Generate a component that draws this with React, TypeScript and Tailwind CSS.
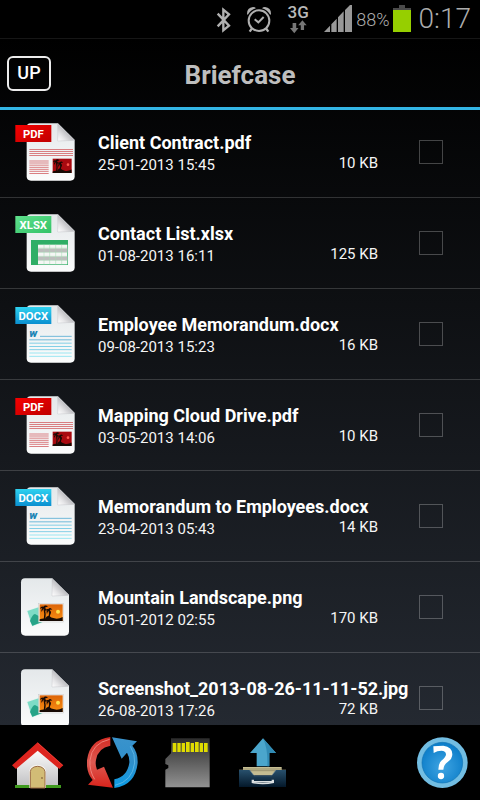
import { useState, type ReactNode } from "react";

type FileKind = "pdf" | "xlsx" | "docx" | "image";

type FileItem = {
  name: string;
  date: string;
  size: string;
  kind: FileKind;
};

const files: FileItem[] = [
  { name: "Client Contract.pdf", date: "25-01-2013 15:45", size: "10 KB", kind: "pdf" },
  { name: "Contact List.xlsx", date: "01-08-2013 16:11", size: "125 KB", kind: "xlsx" },
  { name: "Employee Memorandum.docx", date: "09-08-2013 15:23", size: "16 KB", kind: "docx" },
  { name: "Mapping Cloud Drive.pdf", date: "03-05-2013 14:06", size: "10 KB", kind: "pdf" },
  { name: "Memorandum to Employees.docx", date: "23-04-2013 05:43", size: "14 KB", kind: "docx" },
  { name: "Mountain Landscape.png", date: "05-01-2012 02:55", size: "170 KB", kind: "image" },
  { name: "Screenshot_2013-08-26-11-11-52.jpg", date: "26-08-2013 17:26", size: "72 KB", kind: "image" },
];

/* ================= FILE ICONS ================= */

// shared gradients, referenced by id from every icon
function IconDefs() {
  return (
    <svg className="absolute size-0" aria-hidden="true">
      <defs>
        <linearGradient id="page" x1="0" y1="0" x2="0" y2="1">
          <stop offset="0" stopColor="#e4e8ea" />
          <stop offset="1" stopColor="#fbfcfc" />
        </linearGradient>
        <linearGradient id="fold" x1="1" y1="0" x2="0" y2="1">
          <stop offset="0.45" stopColor="#b9b9bd" />
          <stop offset="0.75" stopColor="#e6e6e8" />
          <stop offset="1" stopColor="#ffffff" />
        </linearGradient>
        <linearGradient id="tag-pdf" x1="0" y1="0" x2="1" y2="1">
          <stop offset="0" stopColor="#f60000" />
          <stop offset="1" stopColor="#c00000" />
        </linearGradient>
        <linearGradient id="tag-xlsx" x1="0" y1="0" x2="1" y2="1">
          <stop offset="0" stopColor="#5fe08c" />
          <stop offset="1" stopColor="#33c267" />
        </linearGradient>
        <linearGradient id="tag-docx" x1="0" y1="0" x2="0" y2="1">
          <stop offset="0" stopColor="#2fd2f0" />
          <stop offset="1" stopColor="#0a8fd0" />
        </linearGradient>
        <linearGradient id="sunset" x1="0" y1="0" x2="0" y2="1">
          <stop offset="0" stopColor="#dc6408" />
          <stop offset="1" stopColor="#f98f12" />
        </linearGradient>
        <linearGradient id="wall" x1="0" y1="0" x2="0" y2="1">
          <stop offset="0" stopColor="#ffffff" />
          <stop offset="1" stopColor="#bfbfc1" />
        </linearGradient>
        <linearGradient id="red-arrow" x1="0" y1="0" x2="0" y2="1">
          <stop offset="0" stopColor="#d42a22" />
          <stop offset="0.5" stopColor="#dd5a52" />
          <stop offset="1" stopColor="#d9231b" />
        </linearGradient>
        <linearGradient id="blue-arrow" x1="0" y1="0" x2="0" y2="1">
          <stop offset="0" stopColor="#3a93cc" />
          <stop offset="0.5" stopColor="#2f8fcb" />
          <stop offset="1" stopColor="#0b9de6" />
        </linearGradient>
        <linearGradient id="card" x1="0" y1="0" x2="0" y2="1">
          <stop offset="0" stopColor="#2c2c2c" />
          <stop offset="0.4" stopColor="#555555" />
          <stop offset="1" stopColor="#929292" />
        </linearGradient>
        <linearGradient id="drawer" x1="0" y1="0" x2="0" y2="1">
          <stop offset="0" stopColor="#28506c" />
          <stop offset="1" stopColor="#04182a" />
        </linearGradient>
        <radialGradient id="help" cx="0.5" cy="0.6" r="0.6">
          <stop offset="0" stopColor="#3fa4e2" />
          <stop offset="1" stopColor="#0a7cc8" />
        </radialGradient>
      </defs>
    </svg>
  );
}

function Page() {
  return (
    <>
      <path
        d="M92 40H174L224 89V199Q224 212 211 212H93Q80 212 80 199V52Q80 40 92 40Z"
        fill="url(#page)"
      />
      <path d="M173 41L223 91Q205 92 173 93Q174 70 173 41Z" fill="url(#fold)" stroke="#b4b4b8" strokeWidth="1" />
    </>
  );
}

function Tag({ label, fill }: { label: string; fill: string }) {
  return (
    <>
      <rect x="46" y="45" width="108" height="51" fill={fill} />
      <text
        x="100"
        y="83"
        textAnchor="middle"
        fill="#fff"
        className="font-[Roboto,sans-serif] text-[34px] font-bold"
      >
        {label}
      </text>
    </>
  );
}

function Palm() {
  return (
    <g fill="#170a04">
      <path d="M0 50V45Q8 42 16 43Q22 33 28 34Q34 40 44 42Q56 45 69 38V50Z" />
      <path d="M12 46Q16 28 11 10L15 10Q20 28 17 46ZM25 38Q31 28 25 16L29 16Q34 28 30 38Z" />
      <path d="M1 14Q3 5 11 7Q17 0 25 7Q19 7 16 10Q21 13 20 22Q16 16 13 12Q9 15 6 23Q3 17 8 12Q4 11 1 14ZM16 21Q19 12 26 14Q32 7 38 16Q32 14 30 17Q36 21 34 31Q30 24 27 19Q23 23 22 30Q18 24 23 18Q19 18 16 21Z" />
    </g>
  );
}

function FileIcon({ kind }: { kind: FileKind }) {
  return (
    <svg viewBox="36 36 192 180" className="h-[60px] w-16 shrink-0" aria-hidden="true">
      {kind === "pdf" && (
        <>
          <Page />
          <Tag label="PDF" fill="url(#tag-pdf)" />
          <path d="M88 118.500H219M88 124.500H219M88 130.500H219M88 136.500H219" stroke="#d4666a" strokeWidth="2.500" />
          <path
            d="M88 153H146M88 159H146M88 165.500H146M88 172H146M88 178H146M88 184H146M88 190.500H146"
            stroke="#d4666a"
            strokeWidth="2.500"
          />
          <rect x="158" y="146" width="57" height="43" fill="#a80a10" />
          <circle cx="204" cy="164" r="4" fill="#ff5a50" />
          <g transform="translate(158 145) scale(0.82 0.88)">
            <Palm />
          </g>
        </>
      )}
      {kind === "xlsx" && (
        <>
          <Page />
          <Tag label="XLSX" fill="url(#tag-xlsx)" />
          <rect x="93" y="117" width="111" height="75" fill="#2fae66" />
          <rect x="114" y="131" width="88" height="59" fill="#f4f6f4" />
          <path d="M114 148H202M114 172H202" stroke="#bdbdbd" strokeWidth="11" />
          <path
            d="M114 141.500H202M114 154H202M114 166H202M114 178H202M132 131V190M149 131V190M167 131V190M185 131V190"
            stroke="#a5d8b5"
            strokeWidth="1.500"
          />
        </>
      )}
      {kind === "docx" && (
        <>
          <Page />
          <Tag label="DOCX" fill="url(#tag-docx)" />
          <text
            x="88"
            y="135"
            fill="#1d85b5"
            className="font-[Roboto,sans-serif] text-[34px] font-black italic"
          >
            w
          </text>
          <path d="M120 133H215M88 143.500H215" stroke="#6fb9d9" strokeWidth="3" />
          <path d="M88 153.500H215M88 163.500H215M88 173H215" stroke="#83cfe6" strokeWidth="3" />
          <path d="M88 183H215M88 193H215" stroke="#9be6f2" strokeWidth="3" />
        </>
      )}
      {kind === "image" && (
        <g transform="translate(-17 0)">
          <Page />
          <path d="M96 137L134 124L146 173L112 185Z" fill="#e6f3f0" />
          <path d="M99 138L133 127L144 171L114 183Z" fill="#7ddcc6" />
          <path d="M107 168Q114 148 122 147Q132 152 140 158L143 171L114 182Z" fill="#27a488" />
          <rect x="133" y="115" width="75" height="56" fill="#f3f3f3" stroke="#c8c8c8" strokeWidth="1.500" />
          <rect x="136" y="118" width="69" height="50" fill="url(#sunset)" />
          <circle cx="191" cy="140" r="6" fill="#ffe04a" />
          <g transform="translate(136 118)">
            <Palm />
          </g>
        </g>
      )}
    </svg>
  );
}

/* ================= STATUS BAR ================= */

function StatusBar() {
  return (
    <div className="flex h-[38px] shrink-0 items-center justify-end bg-black pr-[9px] text-[#adadad]">
      <svg viewBox="48 0 48 114" className="mr-3.5 h-[38px] w-4" aria-label="Bluetooth">
        <path d="M53 41L87 77L70 91V29L87 43L53 79" fill="none" stroke="#b0b0b0" strokeWidth="7" />
      </svg>
      <svg viewBox="138 0 78 114" className="mr-4 h-[38px] w-[26px]" aria-label="Alarm">
        <circle cx="177" cy="62" r="31" fill="none" stroke="#b0b0b0" strokeWidth="6" />
        <path d="M164 58L175 67L191 51" fill="none" stroke="#b0b0b0" strokeWidth="6" />
        <path d="M156 85L149 95M198 85L205 95" stroke="#b0b0b0" strokeWidth="7" />
        <path
          d="M141 41Q141 23 159 21Q165 21 168 25Q151 30 143 45ZM213 41Q213 23 195 21Q189 21 186 25Q203 30 211 45Z"
          fill="#b0b0b0"
        />
      </svg>
      <div className="mr-4 flex w-5 flex-col items-center">
        <span className="text-[17px] leading-4 font-medium text-[#b8b8b8]">3G</span>
        <svg viewBox="273 57 52 42" className="h-3.5 w-[17px]" aria-hidden="true">
          <path d="M281 66H292V81H299L286 97L273 81H281Z" fill="#777" />
          <path d="M306 87H316V73H324L311 57L298 73H306Z" fill="#777" />
        </svg>
      </div>
      <svg viewBox="375 0 84 114" className="mr-1 h-[38px] w-7" aria-label="Signal">
        <path
          d="M375 96L393 77V96ZM397 73L413 56V96H397ZM417 52L434 34V96H417ZM438 30L453 15H459V96H438Z"
          fill="#989898"
        />
      </svg>
      <span className="text-[18px] font-light">88%</span>
      <svg viewBox="579 0 54 114" className="mr-2 ml-[3px] h-[38px] w-[18px]" aria-label="Battery">
        <path d="M579 30V24H597V15H615V24H633V30Z" fill="#4a4a4a" />
        <rect x="579" y="30" width="54" height="66" fill="#96cf00" />
      </svg>
      <span className="text-[28px] font-light">0:17</span>
    </div>
  );
}

/* ================= FILE ROW ================= */

function FileRow({ file }: { file: FileItem }) {
  const [checked, setChecked] = useState(false);

  return (
    <li className="flex h-[91px] items-center border-b border-white/17 pr-[37px] pl-3">
      <FileIcon kind={file.kind} />
      <div className="ml-[22px] min-w-0 flex-1 pt-1">
        <p className="text-[18px] leading-[22px] font-bold whitespace-nowrap text-white">{file.name}</p>
        <div className="flex h-[22px] items-center justify-between text-[15px] leading-[22px] text-[#f5f5f5]">
          <span>{file.date}</span>
          <span className="pb-1">{file.size}</span>
        </div>
      </div>
      <input
        type="checkbox"
        aria-label={file.name}
        checked={checked}
        onChange={(e) => setChecked(e.target.checked)}
        className="ml-[41px] size-6 shrink-0 appearance-none border border-white/25 checked:bg-[#33b5e5]"
      />
    </li>
  );
}

/* ================= TOOLBAR ================= */

function ToolButton({ label, viewBox, children }: { label: string; viewBox: string; children: ReactNode }) {
  return (
    <button type="button" aria-label={label}>
      <svg viewBox={viewBox} className="size-[52px]" aria-hidden="true">
        {children}
      </svg>
    </button>
  );
}

function Toolbar() {
  return (
    <nav className="flex h-[75px] shrink-0 items-center gap-[23px] bg-black px-3">
      <ToolButton label="Home" viewBox="36 36 156 156">
        <path d="M51 112L113 68L174 112V188H51Z" fill="url(#wall)" />
        <path d="M45 180H90V189H45ZM136 180H183V189H136Z" fill="#3f9a1e" />
        <path d="M88 189V137Q90 120 112 119Q135 120 138 137V189Z" fill="#f6f3ee" />
        <path d="M91 189V140Q93 125 113 124Q132 125 135 140V189Z" fill="#d2bc76" stroke="#9a6c45" strokeWidth="3" />
        <circle cx="126" cy="159" r="2.500" fill="#6d4528" />
        <path d="M113 52L190 121L178 132L113 77L48 132L36 121Z" fill="#dd241e" />
        <path d="M113 54L188 121" stroke="#f04a40" strokeWidth="2" />
      </ToolButton>
      <ToolButton label="Refresh" viewBox="261 36 156 156">
        <path
          d="M331 36V62Q294 68 288 105Q285 120 291 134L312 125L339 188L264 179L278 165Q258 142 261 106Q268 44 331 36Z"
          fill="url(#red-arrow)"
        />
        <path d="M329 43Q276 54 270 106Q268 138 284 163" fill="none" stroke="#ef8078" strokeWidth="3" />
        <path
          d="M336 37L411 49L397 62Q414 82 413 114Q406 181 343 189V163Q382 154 388 113Q389 96 381 83L365 101Z"
          fill="url(#blue-arrow)"
        />
        <path d="M391 64Q406 87 404 114Q397 169 345 181" fill="none" stroke="#5ab4e4" strokeWidth="3" />
      </ToolButton>
      <ToolButton label="SD card" viewBox="36 36 156 156">
        <path d="M63 40H179V187H46V134L55 129V121L46 117V102L63 85Z" fill="url(#card)" />
        <path
          d="M68 54H79V81H68ZM82 54H92V81H82ZM95 54H105V81H95ZM108 51H119V81H108ZM122 54H132V81H122ZM135 51H146V81H135ZM149 54H159V81H149ZM162 54H173V81H162Z"
          fill="#e0dc00"
        />
      </ToolButton>
      <ToolButton label="Upload" viewBox="261 36 156 156">
        <path d="M279 126H395V134H408V150H267V134H279Z" fill="#c5bd92" />
        <path d="M279 132H395M282 137H392" stroke="#857f5e" strokeWidth="2" />
        <path d="M267 135H299L312 152H365L378 135H408V186H267Z" fill="url(#drawer)" />
        <path d="M299 135L312 152H365L378 135" fill="none" stroke="#6b8798" strokeWidth="2" />
        <path d="M305 164H312V168H365V164H372V174Q338 182 305 174Z" fill="#dce0e2" />
        <path d="M313 172H364Q338 176 313 172Z" fill="#5d6d77" />
        <path d="M339 40L378 84H358V124H320V84H300Z" fill="#4ba6cc" />
        <path d="M339 40L378 84H358V124H352Q354 70 339 40Z" fill="#318bb4" />
      </ToolButton>
      <div className="flex-1" />
      <ToolButton label="Help" viewBox="78 291 156 156">
        <circle cx="157" cy="368" r="76" fill="#72bde2" />
        <circle cx="157" cy="368" r="61" fill="url(#help)" stroke="#1274b4" strokeWidth="2" />
        <path
          d="M130 319Q144 317 160 317Q187 320 187 343Q187 357 173 366Q161 374 160 389H145Q145 371 154 362Q168 352 168 343Q167 332 154 332Q142 332 131 339Z"
          fill="#fff"
        />
        <circle cx="153" cy="408" r="9.500" fill="#fff" />
      </ToolButton>
    </nav>
  );
}

export default function App() {
  return (
    <div className="flex h-screen flex-col bg-black font-[Roboto,sans-serif]">
      <IconDefs />
      <StatusBar />

      <main className="flex min-h-0 flex-1 flex-col bg-linear-to-b/srgb from-black to-[#242931]">
        <header className="relative z-10 grid h-[72px] shrink-0 grid-cols-[1fr_auto_1fr] items-center border-t border-b-[3px] border-t-[#161616] border-b-[#33b5e5] px-[7px]">
          <button
            type="button"
            className="h-[35px] w-11 rounded-md border-2 border-[#ececec] text-[18px] leading-none font-medium text-white"
          >
            UP
          </button>
          <h1 className="pt-1 text-[26px] font-bold text-[#bebebe]">Briefcase</h1>
        </header>

        {/* first row slides under the blue divider */}
        <ul className="-mt-[3px] min-h-0 flex-1 overflow-y-auto [scrollbar-width:none]">
          {files.map((file) => (
            <FileRow key={file.name} file={file} />
          ))}
        </ul>
      </main>

      <Toolbar />
    </div>
  );
}
